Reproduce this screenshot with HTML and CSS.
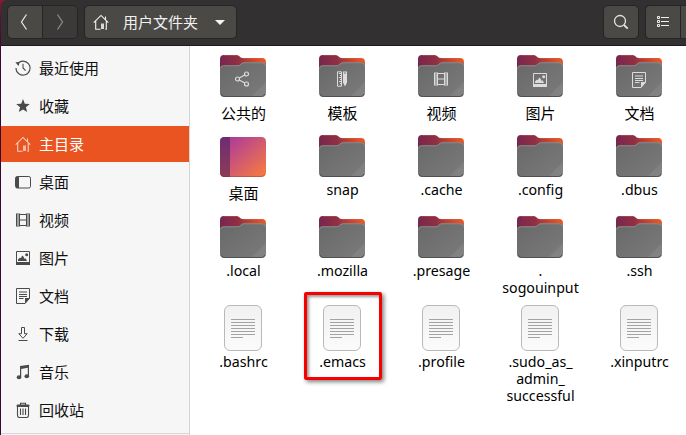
FILE: index.html
```html
<!DOCTYPE html>
<html lang="zh-CN">
<head>
<meta charset="utf-8">
<title>主目录</title>
<link rel="stylesheet" href="styles.css">
</head>
<body>
<svg class="defs" width="0" height="0" aria-hidden="true">
  <defs>
    <linearGradient id="g-back" x1="0" y1="0" x2="1" y2="0">
      <stop offset="0" stop-color="#77264f"/><stop offset=".4" stop-color="#913043"/><stop offset=".6" stop-color="#ba3e35"/><stop offset="1" stop-color="#ef5a25"/>
    </linearGradient>
    <linearGradient id="g-front" x1="0" y1="0" x2="1" y2="1">
      <stop offset="0" stop-color="#686868"/><stop offset="1" stop-color="#7b7b7b"/>
    </linearGradient>
    <linearGradient id="g-desk" x1="0" y1="0" x2="1" y2="1">
      <stop offset="0.1" stop-color="#aa3b98"/><stop offset=".5" stop-color="#cf5873"/><stop offset="1" stop-color="#fa7d3a"/>
    </linearGradient>
    <linearGradient id="g-strip" x1="0" y1="0" x2="0" y2="1">
      <stop offset="0" stop-color="#6e2c72"/><stop offset="1" stop-color="#8d3c56"/>
    </linearGradient>
    <linearGradient id="g-file" x1="0" y1="0" x2="0" y2="1">
      <stop offset="0" stop-color="#f1f1f1"/><stop offset="1" stop-color="#fbfbfb"/>
    </linearGradient>
    <symbol id="home" viewBox="0 0 16 16">
      <path d="M.7 8.6 8 1.4l7.3 7.2M12.5 5.8V2.5M2.7 7v8.3h4.8m4.8 0h1V7" fill="none" stroke="currentColor" stroke-width="1.1"/>
      <path d="M8 9.5h3V15H8z" fill="currentColor" opacity=".85"/>
    </symbol>
    <symbol id="recent" viewBox="0 0 16 16">
      <path d="M2.2 4.2A7 7 0 1 1 1 8M8 3.7V8l2.6 2.7" fill="none" stroke="currentColor" stroke-width="1.1"/>
      <path d="M.3 2.2 4.6 2 3.7 6z" fill="currentColor"/>
    </symbol>
    <symbol id="star" viewBox="0 0 16 16">
      <path d="m8 1 1.8 4.7 5 .3-3.9 3.2 1.3 4.9L8 11.4l-4.2 2.7 1.3-4.9L1.2 6l5-.3z" fill="currentColor"/>
    </symbol>
    <symbol id="desktop" viewBox="0 0 16 16">
      <rect x=".5" y="2.5" width="15" height="11.5" rx="1.7" fill="none" stroke="currentColor"/>
      <path d="M1 3h3v11H1z" fill="currentColor"/>
    </symbol>
    <symbol id="video" viewBox="0 0 16 16">
      <path d="M1.5 1.5v13M14.5 1.5v13" fill="none" stroke="currentColor"/>
      <path d="M3 1.5v13M13 1.5v13" fill="none" stroke="currentColor" stroke-width="2" stroke-dasharray="1 1"/>
      <path d="M4.5 1.5v13M11.5 1.5v13M4 2.5h8M4 8h8M4 13.5h8" fill="none" stroke="currentColor"/>
    </symbol>
    <symbol id="picture" viewBox="0 0 16 16">
      <path d="M1.5 1.5h13v13h-13z" fill="none" stroke="currentColor"/>
      <path d="M1 12h14v3H1zM3 11V9.6l2-2 1 .6 1-2.7 1.4 1L9.7 9l1-.8L12 11z" fill="currentColor"/>
      <circle cx="11.7" cy="4.7" r="1.5" fill="currentColor"/>
    </symbol>
    <symbol id="document" viewBox="0 0 16 16">
      <path d="M1.5.5h13v9.8L10 15.5H1.5zM4 4h8M4 6.5h8M4 8.5h8M4 10.5h4.5" fill="none" stroke="currentColor"/>
      <path d="M10 10h5l-5 5.7z" fill="currentColor"/>
    </symbol>
    <symbol id="download" viewBox="0 0 16 16">
      <path d="M6.5 1.5h3v6.2h2.7L8 12.3 3.8 7.7h2.7zM3.5 14.5h9" fill="none" stroke="currentColor"/>
    </symbol>
    <symbol id="music" viewBox="0 0 16 16">
      <path d="M5 2.1 14 .8v11h-1.2v-8L6.2 5v8H5z" fill="currentColor"/>
      <ellipse cx="4" cy="13.3" rx="2.3" ry="2" fill="currentColor"/><ellipse cx="11.8" cy="12.2" rx="2.3" ry="2" fill="currentColor"/>
    </symbol>
    <symbol id="trash" viewBox="0 0 16 16">
      <path d="M5.5 3V1.3h5V3M2.5 5v8.5q0 2 2 2h7q2 0 2-2V5M5.5 6.5v6.5M8 6.5v6.5M10.5 6.5v6.5" fill="none" stroke="currentColor" stroke-width="1.1"/>
      <path d="M1.7 5V3.3q0-.8 1-.8h10.6q1 0 1 .8V5z" fill="currentColor"/>
    </symbol>
    <symbol id="share" viewBox="0 0 16 16">
      <g fill="none" stroke="currentColor" stroke-width="1.2"><circle cx="3.5" cy="8" r="2"/><circle cx="12.5" cy="3" r="2"/><circle cx="12.5" cy="13" r="2"/><path d="m5.3 7 5.4-3M5.3 9l5.4 3"/></g>
    </symbol>
    <symbol id="template" viewBox="0 0 16 16">
      <path d="M3.5.8h4v14.4h-4z" fill="none" stroke="currentColor"/>
      <path d="M5 2.5h2.5M6 4.5h1.5M5 6.500h2.5M6 8.500h1.500M5 10.500h2.500M6 12.500h1.500" stroke="currentColor"/>
      <path d="M9 .5h4v11L11 15.500 9 11.500z" fill="currentColor"/><path d="M10 2h2" stroke="#707070"/>
    </symbol>
    <symbol id="folder" viewBox="0 0 46 42">
      <path d="M0 15V4Q0 0 4 0h12.500q2 0 3.200 1.500t3.300 1.500H42q4 0 4 4v8z" fill="url(#g-back)"/>
      <path d="M4 .5h12.500M23 3.500h19" stroke="#e96c51" stroke-opacity=".35" fill="none"/>
      <path d="M0 14q0-3.700 3.500-3.700h14q2 0 3.200-1.500t3.300-1.500h18.500Q46 7.300 46 11v26.500q0 4.500-4.500 4.500h-37Q0 42 0 37.500z" fill="url(#g-front)"/>
      <path d="M.5 13.500q.4-2.700 3-2.700h14q2.200 0 3.400-1.500t3.100-1.500h18q3.500 0 3.500 3" fill="none" stroke="#929292" stroke-width=".8"/>
      <path d="M46 27v10.500q0 4.500-4.500 4.500H31z" fill="#fff" opacity=".07"/>
      <path d="M1 39q1 2.500 3.500 2.500h37q2.500 0 3.500-2.500" fill="none" stroke="#505050"/>
    </symbol>
    <symbol id="desk-folder" viewBox="0 0 46 42">
      <rect y="2" width="46" height="40" rx="4.500" fill="url(#g-desk)"/>
      <path d="M10 2H4.500Q0 2 0 6.500v31Q0 42 4.500 42H10z" fill="url(#g-strip)"/>
      <path d="M1 39q1 2.500 3.500 2.500h37q2.500 0 3.500-2.500" fill="none" stroke="#703040" stroke-opacity=".35"/>
    </symbol>
    <symbol id="file" viewBox="0 0 38 46">
      <rect x=".5" y=".5" width="37" height="45" rx="5.500" fill="url(#g-file)" stroke="#b9b9b9"/>
      <path d="M7 14.500h24M7 17.500h24M7 20.500h24M7 23.500h24M7 26.500h24M7 29.500h24M7 32.500h12" stroke="#a3a3a3"/>
    </symbol>
  </defs>
</svg>

<div class="window">
  <header class="bar">
    <div class="group">
      <button class="btn"><svg width="34" height="32" viewBox="0 0 34 32"><path d="m18.500 8.500-5 7.500 5 7.500" fill="none" stroke="#e4e4e2" stroke-width="1.300"/></svg></button>
      <button class="btn btn-off"><svg width="34" height="32" viewBox="0 0 34 32"><path d="m14.500 8.500 5 7.500-5 7.500" fill="none" stroke="#8b8a88" stroke-width="1.300"/></svg></button>
    </div>
    <button class="group path"><svg width="16" height="16"><use href="#home"/></svg><span>用户文件夹</span><i class="caret"></i></button>
    <div class="spacer"></div>
    <button class="group search"><svg width="34" height="32" viewBox="0 0 34 32" fill="none" stroke="#e4e4e2"><circle cx="16" cy="15" r="5.500" stroke-width="1.300"/><path d="m20 19 3.700 3.700" stroke-width="1.800"/></svg></button>
    <div class="group views">
      <button class="btn"><svg width="34" height="32" viewBox="0 0 34 32" fill="none" stroke="#f0f0ee"><path d="M11.500 10.500h2v2h-2zM11.500 14.500h2v2h-2zM11.500 18.500h2v2h-2zM15 11.500h8M15 15.500h8M15 19.500h8"/></svg></button>
      <button class="btn"></button>
    </div>
  </header>
  <div class="body">
    <nav class="side">
      <a><svg><use href="#recent"/></svg>最近使用</a>
      <a><svg><use href="#star"/></svg>收藏</a>
      <a class="on"><svg><use href="#home"/></svg>主目录</a>
      <a><svg><use href="#desktop"/></svg>桌面</a>
      <a><svg><use href="#video"/></svg>视频</a>
      <a><svg><use href="#picture"/></svg>图片</a>
      <a><svg><use href="#document"/></svg>文档</a>
      <a><svg><use href="#download"/></svg>下载</a>
      <a><svg><use href="#music"/></svg>音乐</a>
      <a><svg><use href="#trash"/></svg>回收站</a>
      <hr>
    </nav>
    <main class="grid">
      <div class="item zh"><svg class="folder"><use href="#folder"/><use href="#share" x="14" y="16" width="16" height="16"/></svg><p>公共的</p></div>
      <div class="item zh"><svg class="folder"><use href="#folder"/><use href="#template" x="15" y="16" width="16" height="16"/></svg><p>模板</p></div>
      <div class="item zh"><svg class="folder"><use href="#folder"/><use href="#video" x="15" y="16" width="16" height="16"/></svg><p>视频</p></div>
      <div class="item zh"><svg class="folder"><use href="#folder"/><use href="#picture" x="15" y="17" width="16" height="16"/></svg><p>图片</p></div>
      <div class="item zh"><svg class="folder"><use href="#folder"/><use href="#document" x="15" y="17" width="16" height="16"/></svg><p>文档</p></div>

      <div class="item zh"><svg class="folder"><use href="#desk-folder"/></svg><p>桌面</p></div>
      <div class="item"><svg class="folder"><use href="#folder"/></svg><p>snap</p></div>
      <div class="item"><svg class="folder"><use href="#folder"/></svg><p>.cache</p></div>
      <div class="item"><svg class="folder"><use href="#folder"/></svg><p>.config</p></div>
      <div class="item"><svg class="folder"><use href="#folder"/></svg><p>.dbus</p></div>

      <div class="item"><svg class="folder"><use href="#folder"/></svg><p>.local</p></div>
      <div class="item"><svg class="folder"><use href="#folder"/></svg><p>.mozilla</p></div>
      <div class="item"><svg class="folder"><use href="#folder"/></svg><p>.presage</p></div>
      <div class="item"><svg class="folder"><use href="#folder"/></svg><p>.<br>sogouinput</p></div>
      <div class="item"><svg class="folder"><use href="#folder"/></svg><p>.ssh</p></div>

      <div class="item doc"><svg class="file"><use href="#file"/></svg><p>.bashrc</p></div>
      <div class="item doc marked"><svg class="file"><use href="#file"/></svg><p>.emacs</p></div>
      <div class="item doc"><svg class="file"><use href="#file"/></svg><p>.profile</p></div>
      <div class="item doc"><svg class="file"><use href="#file"/></svg><p>.sudo_as_<br>admin_<br>successful</p></div>
      <div class="item doc"><svg class="file"><use href="#file"/></svg><p>.xinputrc</p></div>
    </main>
  </div>
</div>
</body>
</html>
```
FILE: styles.css
```css
*, *::after { box-sizing: border-box; }
body {
  margin: 0;
  overflow: hidden;
  background: linear-gradient(#8a1a35, #5a0f35 20px, #3b0533 60px);
  font: 15px/20px "Noto Sans", "Noto Sans CJK SC", sans-serif;
  color: #111;
}
.defs { display: block; height: 0; }
svg { display: block; flex: none; }
button { margin: 0; border: 0; padding: 0; font: inherit; color: inherit; background: none; }
.window {
  height: 435px;
  margin-left: 1px;
  display: flex;
  flex-direction: column;
  border-top-left-radius: 6px;
  overflow: hidden;
}
.bar {
  height: 46px;
  flex: none;
  display: flex;
  padding: 5px 0 0 6px;
  background: #323030;
  border-bottom: 1px solid #1c1a1b;
}
.group {
  height: 34px;
  display: flex;
  border: 1px solid #262424;
  border-radius: 5px;
  background: #4a4946;
  overflow: hidden;
  color: #f2f2f0;
}
.btn { width: 34px; }
.btn + .btn { width: 35px; border-left: 1px solid #262424; }
.btn-off { background: #3b3a39; }
.path { width: 153px; margin-left: 6px; align-items: center; padding-left: 8px; }
.path span { margin-left: 14px; }
.caret { margin-left: 17px; border: 5px solid transparent; border-top-color: #f4f4f2; border-bottom: 0; }
.spacer { flex: 1; }
.search { width: 36px; }
.views { width: 41px; margin-left: 6px; border-right: 0; border-radius: 5px 0 0 5px; }
.body { flex: 1; display: flex; min-height: 0; }
.side {
  width: 189px;
  flex: none;
  padding-top: 4px;
  background: #f6f6f6;
  border-right: 1px solid #d3d3d3;
}
.side a {
  height: 36px;
  margin-bottom: 2px;
  padding-left: 14px;
  display: flex;
  align-items: center;
  gap: 8px;
}
.side svg { width: 16px; height: 16px; color: #4a4a4a; }
.side .on { background: #e95420; color: #fff; }
.side .on svg { color: #f9cdbd; }
.side hr { margin: 3px 0 0; border: 0; border-top: 1px solid #d8d8d8; }
.side a:last-of-type { margin-bottom: 5px; }
.side hr { margin-top: 0; }
.grid {
  flex: 1;
  display: grid;
  grid-template-columns: repeat(5, 99px);
  grid-template-rows: 80px 81px 89px 121px;
  padding: 9px 0 0 3px;
  background: #fff;
}
.item { text-align: center; font-size: 14.2px; line-height: 17px; position: relative; color: #000; }
.item svg { margin: 0 auto; }
.folder { width: 46px; height: 42px; color: #dcdcdc; }
.file { width: 38px; height: 46px; }
.item p { margin: 4px 0 0; padding-left: 2px; }
.zh p { font-size: 15px; line-height: 20px; margin-top: 6px; }
.doc p { margin-top: 2px; }
.marked::after {
  content: "";
  position: absolute;
  left: 12px;
  top: -13px;
  width: 78px;
  height: 88px;
  border: 3px solid #f60000;
  border-radius: 2px;
  box-shadow: 2px 2px 4px rgba(0, 0, 0, .5), inset 2px 2px 3px rgba(0, 0, 0, .4);
}
```
